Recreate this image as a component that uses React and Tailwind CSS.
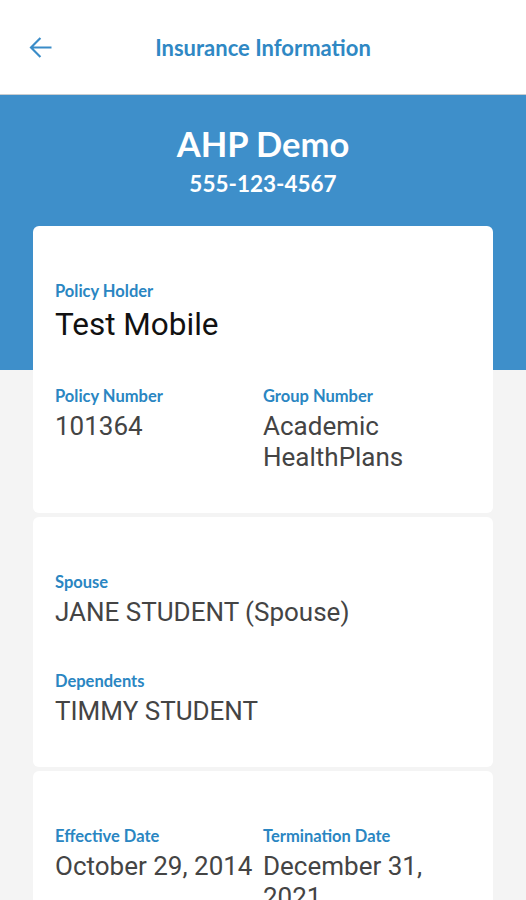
import React from 'react';

const lato = { fontFamily: 'Lato, "Open Sans", sans-serif' };
const roboto = { fontFamily: 'Roboto, "Liberation Sans", sans-serif' };

const Label = ({ children, className = '' }) => (
  <div style={lato} className={`text-[16.5px] font-bold leading-[18px] text-[#2a86c2] ${className}`}>
    {children}
  </div>
);

const Value = ({ children }) => (
  <div style={roboto} className="mt-[6px] text-[26px] leading-[31px] text-[#444444]">
    {children}
  </div>
);

function Card({ children }) {
  return (
    <div className="rounded-[6px] bg-white px-[22px] pt-[56px] pb-[40px]">{children}</div>
  );
}

export default function App() {
  return (
    <div className="min-h-[900px] w-[526px] overflow-hidden bg-[#f4f4f4]">
      {/* top bar */}
      <div className="relative flex h-[95px] items-center justify-center border-b border-[#c9cdd0] bg-white">
        <svg
          viewBox="0 0 24 24"
          width="33"
          height="33"
          className="absolute left-[24px] top-[31px] fill-[#3a8cc8]"
        >
          <path d="M20 11.2H6.9l5.6-5.6L11.4 4.5 4 12l7.4 7.5 1.1-1.1-5.6-5.6H20z" />
        </svg>
        <h1 style={lato} className="text-[22px] font-bold text-[#2f88c4]">
          Insurance Information
        </h1>
      </div>

      {/* blue banner */}
      <div className="flex h-[275px] flex-col items-center bg-[#3e8fca] pt-[29px] text-white">
        <div style={lato} className="text-[34.5px] font-bold leading-[40px]">AHP Demo</div>
        <div style={lato} className="mt-[5px] text-[22.5px] font-bold leading-[30px]">555-123-4567</div>
      </div>

      {/* cards */}
      <div className="-mt-[144px] flex flex-col gap-[4px] px-[33px]">
        <Card>
          <Label>Policy Holder</Label>
          <div style={roboto} className="mt-[8px] text-[31.5px] leading-[34px] text-[#111111]">
            Test Mobile
          </div>
          <div className="mt-[45px] grid grid-cols-2">
            <div>
              <Label>Policy Number</Label>
              <Value>101364</Value>
            </div>
            <div>
              <Label>Group Number</Label>
              <Value>
                Academic
                <br />
                HealthPlans
              </Value>
            </div>
          </div>
        </Card>

        <Card>
          <Label>Spouse</Label>
          <Value>JANE STUDENT (Spouse)</Value>
          <Label className="mt-[44px]">Dependents</Label>
          <Value>TIMMY STUDENT</Value>
        </Card>

        <Card>
          <div className="grid grid-cols-2">
            <div>
              <Label>Effective Date</Label>
              <Value>October 29, 2014</Value>
            </div>
            <div>
              <Label>Termination Date</Label>
              <Value>December 31, 2021</Value>
            </div>
          </div>
        </Card>
      </div>
    </div>
  );
}
